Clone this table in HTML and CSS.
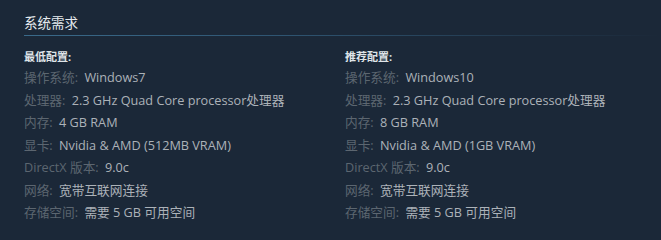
FILE: index.html
```html
<!DOCTYPE html>
<html lang="zh-CN">
<head>
<meta charset="utf-8">
<title>系统需求</title>
<link rel="stylesheet" href="styles.css">
</head>
<body>
<section class="sysreq">
  <h2 class="sysreq-title">系统需求</h2>
  <div class="sysreq-cols">
    <div class="sysreq-col">
      <div class="sysreq-head">最低配置:</div>
      <ul class="sysreq-list">
        <li><span class="lbl">操作系统:</span> <span class="val">Windows7</span></li>
        <li><span class="lbl">处理器:</span> <span class="val">2.3 GHz Quad Core processor处理器</span></li>
        <li><span class="lbl">内存:</span> <span class="val">4 GB RAM</span></li>
        <li><span class="lbl">显卡:</span> <span class="val">Nvidia &amp; AMD (512MB VRAM)</span></li>
        <li><span class="lbl">DirectX 版本:</span> <span class="val">9.0c</span></li>
        <li><span class="lbl">网络:</span> <span class="val">宽带互联网连接</span></li>
        <li><span class="lbl">存储空间:</span> <span class="val">需要 5 GB 可用空间</span></li>
      </ul>
    </div>
    <div class="sysreq-col">
      <div class="sysreq-head">推荐配置:</div>
      <ul class="sysreq-list">
        <li><span class="lbl">操作系统:</span> <span class="val">Windows10</span></li>
        <li><span class="lbl">处理器:</span> <span class="val">2.3 GHz Quad Core processor处理器</span></li>
        <li><span class="lbl">内存:</span> <span class="val">8 GB RAM</span></li>
        <li><span class="lbl">显卡:</span> <span class="val">Nvidia &amp; AMD (1GB VRAM)</span></li>
        <li><span class="lbl">DirectX 版本:</span> <span class="val">9.0c</span></li>
        <li><span class="lbl">网络:</span> <span class="val">宽带互联网连接</span></li>
        <li><span class="lbl">存储空间:</span> <span class="val">需要 5 GB 可用空间</span></li>
      </ul>
    </div>
  </div>
</section>
</body>
</html>
```
FILE: styles.css
```css
html, body {
  margin: 0;
  padding: 0;
  background: #1b2838;
}
body {
  font-family: "Open Sans", "Noto Sans CJK SC", sans-serif;
  width: 661px;
  height: 240px;
  overflow: hidden;
}
.sysreq {
  padding: 13px 0 0 24px;
}
.sysreq-title {
  margin: 0;
  font-size: 13.5px;
  font-weight: normal;
  line-height: 20px;
  color: #e6ebef;
  padding-bottom: 3px;
  border-bottom: 1px solid transparent;
  background-image: linear-gradient(to right, #3a6a8a 0%, #2f5572 40%, rgba(47, 85, 114, 0.25) 85%, rgba(47, 85, 114, 0) 100%);
  background-size: 100% 1px;
  background-repeat: no-repeat;
  background-position: left bottom;
}
.sysreq-cols {
  display: grid;
  grid-template-columns: 321px 1fr;
  margin-top: 11px;
}
.sysreq-head {
  font-size: 11px;
  line-height: 18px;
  color: #dfe4e8;
  font-weight: bold;
  margin-bottom: 2px;
}
.sysreq-list {
  list-style: none;
  margin: 0;
  padding: 0;
  font-size: 12.7px;
  line-height: 18px;
}
.sysreq-list li {
  height: 22.5px;
  white-space: nowrap;
}
.lbl {
  color: #5c6670;
}
.val {
  color: #acb2b8;
  margin-left: 3px;
}
```
